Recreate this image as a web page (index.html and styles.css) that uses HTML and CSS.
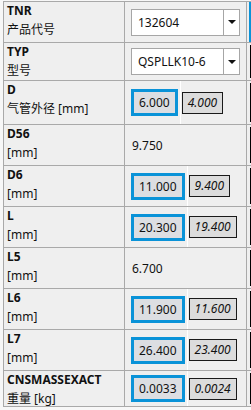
FILE: index.html
```html
<!DOCTYPE html>
<html lang="zh">
<head>
  <meta charset="UTF-8">
  <meta name="viewport" content="width=device-width, initial-scale=1.0">
  <title>属性</title>
  <link rel="stylesheet" href="styles.css">
</head>
<body>
  <div class="grid">
    <!-- TNR -->
    <div class="name"><b>TNR</b><span>产品代号</span></div>
    <div class="value">
      <div class="select"><span class="sel-text">132604</span><span class="sel-btn"><i class="caret"></i></span></div>
    </div>
    <div class="edge"><i class="edge-blue"></i></div>

    <!-- TYP -->
    <div class="name"><b>TYP</b><span>型号</span></div>
    <div class="value">
      <div class="select"><span class="sel-text">QSPLLK10-6</span><span class="sel-btn"><i class="caret"></i></span></div>
    </div>
    <div class="edge"><i class="edge-black"></i></div>

    <!-- D -->
    <div class="name"><b>D</b><span>气管外径 [mm]</span></div>
    <div class="value">
      <span class="num">6.000</span><i class="split"></i><span class="ref">4.000</span>
    </div>
    <div class="edge"><i class="edge-black"></i></div>

    <!-- D56 -->
    <div class="name"><b>D56</b><span>[mm]</span></div>
    <div class="value"><span class="plain">9.750</span></div>
    <div class="edge"><i class="edge-black"></i></div>

    <!-- D6 -->
    <div class="name"><b>D6</b><span>[mm]</span></div>
    <div class="value">
      <span class="num">11.000</span><i class="split"></i><span class="ref">9.400</span>
    </div>
    <div class="edge"><i class="edge-black"></i></div>

    <!-- L -->
    <div class="name"><b>L</b><span>[mm]</span></div>
    <div class="value">
      <span class="num">20.300</span><i class="split"></i><span class="ref">19.400</span>
    </div>
    <div class="edge"><i class="edge-black"></i></div>

    <!-- L5 -->
    <div class="name"><b>L5</b><span>[mm]</span></div>
    <div class="value"><span class="plain">6.700</span></div>
    <div class="edge"><i class="edge-black"></i></div>

    <!-- L6 -->
    <div class="name"><b>L6</b><span>[mm]</span></div>
    <div class="value">
      <span class="num">11.900</span><i class="split"></i><span class="ref">11.600</span>
    </div>
    <div class="edge"><i class="edge-black"></i></div>

    <!-- L7 -->
    <div class="name"><b>L7</b><span>[mm]</span></div>
    <div class="value">
      <span class="num">26.400</span><i class="split"></i><span class="ref">23.400</span>
    </div>
    <div class="edge"><i class="edge-black"></i></div>

    <!-- CNSMASSEXACT -->
    <div class="name"><b>CNSMASSEXACT</b><span>重量 [kg]</span></div>
    <div class="value">
      <span class="num">0.0033</span><i class="split"></i><span class="ref">0.0024</span>
    </div>
    <div class="edge"><i class="edge-black"></i></div>
  </div>
</body>
</html>
```

FILE: styles.css
```css
* {
  margin: 0;
  padding: 0;
  box-sizing: border-box;
}

body {
  background: #f7f7f7;
  font-family: "Noto Sans", "Noto Sans CJK SC", sans-serif;
  font-size: 12px;
  color: #111;
  overflow: hidden;
}

.grid {
  display: grid;
  grid-template-columns: 120px 121px 10px;
  grid-template-rows: 40px 37px 43px 40px 40px 40px 40px 40px 40px 35px;
  gap: 1px;
  padding: 1px;
  margin: 1px 0 0 3px;
  width: max-content;
  background: #a9a9a9;
}

.name,
.value,
.edge {
  background: #efefef;
  overflow: hidden;
}

.name {
  display: flex;
  flex-direction: column;
  gap: 2px;
  padding-left: 3px;
  line-height: 17px;
  white-space: nowrap;
}

.name b {
  font-weight: 700;
}

.value {
  display: flex;
  align-items: center;
  padding-left: 6px;
}

.select {
  display: flex;
  width: 109px;
  height: 27px;
  border: 1px solid #a6a6a6;
  background: #fff;
}

.sel-text {
  flex: 1;
  padding-left: 6px;
  line-height: 25px;
}

.sel-btn {
  display: flex;
  align-items: center;
  justify-content: center;
  width: 16px;
  border-left: 1px solid #a6a6a6;
}

.caret {
  width: 0;
  height: 0;
  border-left: 4px solid transparent;
  border-right: 4px solid transparent;
  border-top: 4px solid #111;
}

.num {
  height: 27px;
  padding: 0 5px;
  border: 3px solid #0a93d8;
  background: #dcdee2;
  line-height: 21px;
}

.split {
  align-self: stretch;
  width: 1px;
  margin: 0 1px 0 2px;
  background: #fff;
}

.ref {
  height: 22px;
  padding: 0 5px;
  border: 1px solid #1a1a1a;
  background: #dcdcdc;
  font-style: italic;
  line-height: 20px;
}

.plain {
  padding-left: 1px;
}

.edge {
  display: flex;
}

.edge-blue {
  width: 4px;
  margin-left: 2px;
  background: #0a93d8;
}

.edge-black {
  width: 4px;
  margin: 2px 0 2px 3px;
  border-left: 2px solid #000;
}
```
